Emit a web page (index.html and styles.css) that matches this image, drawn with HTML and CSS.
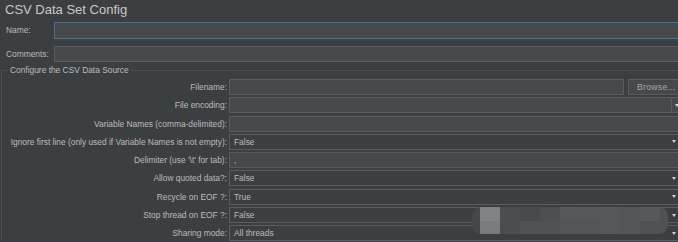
FILE: index.html
```html
<!DOCTYPE html>
<html lang="en">
<head>
<meta charset="UTF-8">
<title>CSV Data Set Config</title>
<link rel="stylesheet" href="styles.css">
</head>
<body>

<div class="panel">
    <h1 class="title">CSV Data Set Config</h1>

    <div class="meta-row">
        <label>Name:</label>
        <div class="field focused"></div>
    </div>
    <div class="meta-row">
        <label>Comments:</label>
        <div class="field"></div>
    </div>

    <fieldset class="group">
        <legend>Configure the CSV Data Source</legend>
        <div class="form-grid">
            <label>Filename:</label>
            <div class="file-row">
                <div class="field"></div>
                <button class="browse">Browse...</button>
            </div>

            <label>File encoding:</label>
            <div class="edit-combo">
                <div class="field"></div>
                <div class="combo-btn"><span class="arrow"></span></div>
            </div>

            <label>Variable Names (comma-delimited):</label>
            <div class="field"></div>

            <label>Ignore first line (only used if Variable Names is not empty):</label>
            <div class="combo">False<span class="arrow"></span></div>

            <label>Delimiter (use '\t' for tab):</label>
            <div class="field text">,</div>

            <label>Allow quoted data?:</label>
            <div class="combo">False<span class="arrow"></span></div>

            <label>Recycle on EOF ?:</label>
            <div class="combo">True<span class="arrow"></span></div>

            <label>Stop thread on EOF ?:</label>
            <div class="combo">False<span class="arrow"></span></div>

            <label>Sharing mode:</label>
            <div class="combo">All threads<span class="arrow"></span></div>
        </div>
    </fieldset>
</div>

<!-- blurred watermark over the bottom rows -->
<div class="mosaic">
    <div class="mosaic-top"></div>
    <div class="mosaic-bottom"></div>
</div>

</body>
</html>
```

FILE: styles.css
```css
body {
    margin: 0;
    background: #3c3f41;
    color: #bbbbbb;
    font-family: "Liberation Sans", Arial, sans-serif;
    font-size: 8.4px;
    overflow: hidden;
}
.panel {
    width: 682px;
}
.title {
    margin: 0;
    height: 20px;
    padding: 2px 0 0 5px;
    box-sizing: border-box;
    font-size: 13px;
    line-height: 16px;
    font-weight: normal;
    color: #c8c8c8;
}
.meta-row {
    display: flex;
    align-items: stretch;
    height: 17px;
    margin-top: 2px;
}
.meta-row + .meta-row {
    margin-top: 7px;
    height: 16px;
}
.meta-row label {
    width: 54px;
    padding-left: 6px;
    box-sizing: border-box;
    line-height: 17px;
}
.field {
    flex: 1;
    height: 16px;
    background: #45494a;
    border: 1px solid #5a5d5f;
    box-sizing: border-box;
}
.meta-row .field {
    height: auto;
}
.field.focused {
    border-color: #4b6e96;
}
.field.text {
    padding-left: 4px;
    line-height: 14px;
}
.group {
    margin: 3px 0 0 1px;
    padding: 3px 0 0 0;
    border: 1px solid #4c4f51;
    border-right: none;
    border-bottom: none;
}
.group legend {
    margin-left: 6px;
    padding: 0 2px;
    line-height: 11px;
}
.form-grid {
    display: grid;
    grid-template-columns: 225px 1fr;
    column-gap: 2px;
    row-gap: 2.3px;
}
.form-grid label {
    text-align: right;
    line-height: 16px;
    white-space: nowrap;
}
.file-row {
    display: flex;
    gap: 4px;
}
.browse {
    width: 54px;
    height: 16px;
    padding: 0 0 0 8px;
    text-align: left;
    background: #45494a;
    border: 1px solid #5a5d5f;
    color: #a9a9a9;
    font-family: inherit;
    font-size: 8.6px;
    letter-spacing: 0.3px;
}
.edit-combo {
    display: flex;
}
.edit-combo .field {
    border-right: none;
}
.combo-btn {
    width: 11px;
    height: 16px;
    box-sizing: border-box;
    background: #45494a;
    border: 1px solid #5a5d5f;
    display: flex;
    align-items: center;
    padding-left: 3px;
}
.combo {
    height: 16px;
    box-sizing: border-box;
    background: #3c3f41;
    border: 1px solid #5a5d5f;
    padding: 0 5px 0 4px;
    line-height: 14px;
    display: flex;
    justify-content: space-between;
    align-items: center;
}
.arrow {
    width: 0;
    height: 0;
    border-left: 2.5px solid transparent;
    border-right: 2.5px solid transparent;
    border-top: 3px solid #d0d0d0;
}
.mosaic {
    position: absolute;
    left: 472px;
    top: 207px;
    width: 196px;
    height: 27px;
    border-radius: 9px;
    overflow: hidden;
}
.mosaic-top,
.mosaic-bottom {
    height: 50%;
}
.mosaic-top {
    background: linear-gradient(to right,
        #46494b 0 8px, #818283 8px 28px, #4b4e50 28px 48px, #484b4d 48px 68px,
        #4c4f51 68px 88px, #56595b 88px 108px, #55585a 108px 128px,
        #56595b 128px 148px, #535658 148px 168px, #56595b 168px 188px, #4f5254 188px);
}
.mosaic-bottom {
    background: linear-gradient(to right,
        #45484a 0 8px, #7a7b7c 8px 28px, #4b4e50 28px 48px, #505355 48px 68px,
        #505355 68px 88px, #525557 88px 108px, #525557 108px 128px,
        #56595b 128px 148px, #535658 148px 168px, #4f5254 168px 188px, #4f5254 188px);
}
```
